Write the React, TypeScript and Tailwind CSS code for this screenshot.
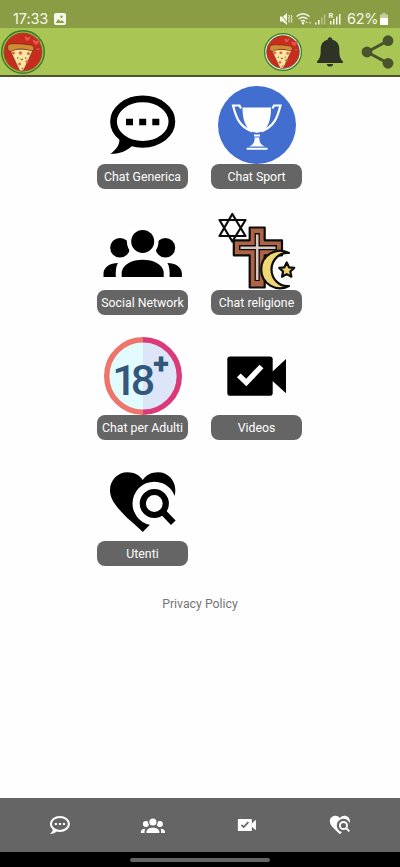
import React from 'react';

type IconProps = { className?: string; gap?: string };

const ChatIcon = ({ className }: IconProps) => (
  <svg viewBox="0 0 78 78" className={className} fill="currentColor">
    <ellipse cx="38.7" cy="35.6" rx="29.2" ry="22.7" fill="none" stroke="currentColor" strokeWidth="6.7" />
    <path d="M15.5 52C16 59 12 63.5 6.5 68C15 68 23 65 28 60L22 54Z" />
    <path d="M22 32.7h7v6.6h-7zM35.2 32.7h7v6.6h-7zM48.3 32.7h7v6.6h-7z" />
  </svg>
);

const PeopleIcon = ({ className, gap = '#fff' }: IconProps) => (
  <svg viewBox="0 0 78 78" className={className} fill="currentColor">
    <circle cx="16" cy="35.8" r="9.8" />
    <circle cx="61.4" cy="35.8" r="9.8" />
    <circle cx="38.7" cy="29.4" r="15.8" fill={gap} />
    <circle cx="38.7" cy="29.4" r="11.5" />
    <path d="M17.7 65V60C19 52 28 47.7 38.7 47.7S58.5 52 59.7 60V65Z" />
    <path d="M-.5 65V61C0 55 6 51 14 51C12 54 11.5 59 11.8 65Z" />
    <path d="M77.9 65V61C77.4 55 71.4 51 63.4 51C65.4 54 65.9 59 65.6 65Z" />
  </svg>
);

const VideoIcon = ({ className, gap = '#fff' }: IconProps) => (
  <svg viewBox="0 0 78 78" className={className} fill="currentColor">
    <rect x="9.3" y="19.4" width="45.4" height="39.3" rx="2.8" />
    <path d="M54 35L68 22V56.3L54 43.5Z" />
    <path d="M20.8 38.4L28.3 45.5L43.5 29.5" fill="none" stroke={gap} strokeWidth="5.4" />
  </svg>
);

const HeartSearchIcon = ({ className, gap = '#fff' }: IconProps) => (
  <svg viewBox="0 0 78 78" className={className} fill="currentColor">
    <path d="M38.7 69C31 61 22 55 14 45C9 39 6 33.5 6 27C6 17 14 9.3 23.5 9.3C30 9.3 35.5 12 38.7 17C42 12 47.5 9.3 54 9.3C63.5 9.3 71.3 17 71.3 27C71.3 30 71 33 69.5 36C64 47 49 58 38.7 69Z" />
    <circle cx="50.3" cy="40.5" r="21.8" fill={gap} />
    <circle cx="50.3" cy="40.5" r="11.5" fill="none" stroke="currentColor" strokeWidth="6.2" />
    <path d="M58.5 48.5L69.3 59.8" stroke="currentColor" strokeWidth="6.4" />
  </svg>
);

const TrophyIcon = ({ className }: IconProps) => (
  <svg viewBox="0 0 78 78" className={className}>
    <circle cx="39" cy="39" r="39" fill="#416ecf" />
    <path d="M24.5 21.5H53C53 34 50 46 38.7 46.7C28 46 24.5 34 24.5 21.5Z" fill="#fff" />
    <path d="M23 22.5L21.5 19.5H15C17.5 29 20 40 34 45.5M54.5 22.5L56 19.5H62.5C60 29 57.5 40 43.5 45.5" fill="none" stroke="#fff" strokeWidth="2.2" />
    <path d="M36 48.5h6v2h-6zM36.7 51.5h4.6C41.3 56 42.5 58.5 47 60.5H31C35.5 58.5 36.7 56 36.7 51.5ZM28.7 61.7H49.5V63.7H28.7Z" fill="#fff" />
  </svg>
);

const ReligionIcon = ({ className }: IconProps) => (
  <svg viewBox="0 0 78 78" className={className} stroke="#0c0c0c" strokeWidth="2.2" strokeLinejoin="round">
    <path d="M14.3 2L1.5 24H27.5ZM14.3 29.5L1.5 8H27.5Z" fill="none" />
    <path d="M31.7 15.5H46.7V28.3H64V43.300H46.700V75.500H31.700V43.300H15.800V28.300H31.700Z" fill="#ae6344" />
    <path d="M39.2 21V69M21 35.700H59" fill="none" strokeWidth="5.2" />
    <path d="M39.2 22.500V68M22.500 35.700H57.500" fill="none" stroke="#d8c8bd" strokeWidth="2.6" />
    <path d="M71 41A18.8 18.8 0 1 0 71 74C62 75 53.5 67.500 53.5 57.500S62 40 71 41Z" fill="#efd874" />
    <path d="M68.7 50.500L71 55.300L76.200 55.900L72.300 59.500L73.400 64.700L68.700 62.100L64 64.700L65.100 59.500L61.200 55.900L66.400 55.300Z" fill="#efd36a" />
  </svg>
);

const AdultIcon = ({ className }: IconProps) => (
  <svg viewBox="0 0 78 78" className={className}>
    <path d="M39 2.7A36.3 36.3 0 0 0 39 75.3" fill="#e1fbfe" stroke="#ed756c" strokeWidth="5.4" />
    <path d="M39 2.7A36.3 36.3 0 0 1 39 75.3" fill="#dce6f8" stroke="#db3a78" strokeWidth="5.4" />
    <text x="8.3 26.7 49.3" y="57.5 57.5 36.5" fill="#31587a" fontFamily="Roboto, sans-serif" fontSize="43" fontWeight="500">
      18<tspan fontSize="29" fontWeight="900">+</tspan>
    </text>
  </svg>
);

const PizzaLogo = ({ className, ring = '#b5b04a' }: { className?: string; ring?: string }) => (
  <svg viewBox="0 0 44 44" className={className}>
    <circle cx="22" cy="22" r="21.3" fill={ring} stroke="#357b2c" strokeWidth="1.4" />
    <circle cx="22" cy="22" r="19" fill="#c92c1d" stroke="#54602a" strokeWidth=".7" />
    <path d="M8.500 19L18 39.500Q20.500 43 23 39.500L32.500 19Z" fill="#fbe5a0" stroke="#6b3518" strokeWidth=".7" />
    <path d="M6.500 17.500C6.500 14.500 8.500 13.700 12 13.700C18 13.700 24 14 29.500 15C33 15.700 33.500 18 32.500 20.500C29 21 28 20 25 19.500C19 18.500 14 19 10 21.500C8 21.500 6.500 20 6.500 17.500Z" fill="#d18b35" stroke="#5c2b16" strokeWidth=".7" />
    <g fill="#e8604a">
      <circle cx="12.500" cy="23" r="1.500" />
      <circle cx="19.500" cy="23" r="1.700" />
      <circle cx="27.500" cy="23.500" r="1.600" />
      <circle cx="26" cy="31.500" r="1.500" />
      <circle cx="18.500" cy="34" r="1.500" />
      <circle cx="21.500" cy="38.500" r="1.100" />
    </g>
    <path d="M16 28h1.300M24 28h1.300M19.500 29q1.200 1.500 2.400 0" fill="none" stroke="#512d20" strokeWidth="1" />
    <g fill="#ef5048" stroke="#7a1a14" strokeWidth=".4">
      <path d="M26.500 11.500C22 9 22.500 5.500 25 6Q26.300 6.300 26.800 7.500Q29.500 4.500 30 7Q30 9.500 26.500 11.500Z" />
      <path d="M35 15.500C30.500 12.500 30.500 9 33 9.300Q34.500 9.500 35 11Q38 8.500 38.500 11Q38.500 13.500 35 15.500Z" />
      <path d="M37 21C34.500 19.500 34.500 17.500 36 17.700L37 18.500Q38.700 17 39 18.500Q39 20 37 21Z" />
    </g>
  </svg>
);

const StatusIcons = () => (
  <svg viewBox="0 0 68 16" className="h-4 w-[68px]" fill="#f5f8e9">
    <path d="M1 5.5h3L8 2v12L4 10.5H1Z" />
    <path d="M1 2.5L10 13.5" stroke="#8a9d45" strokeWidth="1" />
    <path d="M9.500 4l1 1.500-1 1.500 1 1.500-1 1.500 1 1.500M12 4l1 1.500-1 1.500 1 1.500-1 1.500 1 1.500" fill="none" stroke="#f5f8e9" strokeWidth="1" />
    <path d="M17.500 5.500Q24 0 30.500 5.500M19.700 8Q24 4.500 28.300 8M22 10.300Q24 8.700 26 10.300" fill="none" stroke="#f5f8e9" strokeWidth="1.4" />
    <circle cx="24" cy="12.3" r="1.2" />
    <path d="M26 12l1.500-2 1.500 2zM29.500 11h3l-1.500 2z" fill="#c7d29c" />
    <path d="M36 11.500h1.500v2H36zM39 9h1.500v4.500H39z" />
    <path d="M42 6.500h1.500v7H42zM44.800 3.500h1.500v10h-1.500z" fill="#b8c488" />
    <text x="49.500" y="7" fontSize="7.5" fontWeight="700" fontFamily="Roboto, sans-serif">R</text>
    <path d="M51 10h1.500v3.500H51zM54 8h1.500v5.500H54zM57 5.500h1.500v8H57zM60 3h1.500v10.500H60z" />
  </svg>
);

const BellIcon = () => (
  <svg viewBox="0 0 28 30" className="h-[30px] w-7" fill="#2f3326">
    <path d="M14 .3C15.500 .3 16.300 1.300 16.300 2.800C21 4 23.300 7.500 23.300 12C23.300 19 24 21.500 27 24.500V26H1V24.500C4 21.500 4.700 19 4.700 12C4.700 7.500 7 4 11.700 2.800C11.700 1.300 12.500 .3 14 .3Z" />
    <path d="M10.800 27H17.200C17 28.700 15.700 29.600 14 29.600S11 28.700 10.800 27Z" />
  </svg>
);

const ShareIcon = () => (
  <svg viewBox="0 0 34 36" className="h-9 w-[34px]" fill="#49542e">
    <path d="M27 6.700L6 18L27 29.300" fill="none" stroke="#49542e" strokeWidth="3" />
    <circle cx="27" cy="6.7" r="5.4" />
    <circle cx="6" cy="18" r="5.4" />
    <circle cx="27" cy="29.3" r="5.4" />
  </svg>
);

const tiles = [
  { label: 'Chat Generica', Icon: ChatIcon },
  { label: 'Chat Sport', Icon: TrophyIcon },
  { label: 'Social Network', Icon: PeopleIcon },
  { label: 'Chat religione', Icon: ReligionIcon },
  { label: 'Chat per Adulti', Icon: AdultIcon },
  { label: 'Videos', Icon: VideoIcon },
  { label: 'Utenti', Icon: HeartSearchIcon },
];

const tabs = [ChatIcon, PeopleIcon, VideoIcon, HeartSearchIcon];

const App = () => {
  return (
    <div className="flex h-[867px] w-[400px] flex-col overflow-hidden bg-[#fefefe] font-['Roboto',sans-serif]">
      {/* Status bar */}
      <div className="flex h-7 shrink-0 items-end bg-[#8a9d45] pl-[13px] pr-3 font-['Inter',sans-serif] text-[14.5px] leading-4 text-[#f5f8e9]">
        <span className="mb-px w-[36px] whitespace-nowrap tracking-[-0.1px]">17:33</span>
        <svg viewBox="0 0 12 12" className="mb-[3px] ml-[5px] h-3 w-3">
          <rect width="12" height="12" rx="2" fill="#f5f8e9" />
          <path d="M1.500 10L4.500 6L6.500 8.500L8 7L10.500 10Z" fill="#8a9d45" />
          <circle cx="7.5" cy="3.8" r="1.2" fill="#8a9d45" />
        </svg>
        <div className="ml-auto flex items-end">
          <div className="mb-px"><StatusIcons /></div>
          <span className="mb-px w-[32px] whitespace-nowrap tracking-[-0.3px]">62%</span>
          <svg viewBox="0 0 8 12" className="mb-[3px] ml-[1px] h-3 w-2">
            <path d="M2.500 0h3v1.500H8V12H0V1.500h2.500z" fill="#c5cfa2" />
            <path d="M0 5h8v5.500Q8 12 6.500 12h-5Q0 12 0 10.500Z" fill="#fff" />
          </svg>
        </div>
      </div>

      {/* Header */}
      <header className="flex h-[49px] shrink-0 items-center border-b-2 border-[#4c5233] bg-[#a9c553] pl-px pr-[5px]">
        <PizzaLogo className="h-11 w-11" />
        <PizzaLogo className="ml-auto h-[38px] w-[38px]" ring="#e4e8d6" />
        <div className="ml-[14px]"><BellIcon /></div>
        <div className="ml-[17px]"><ShareIcon /></div>
      </header>

      {/* Categories */}
      <main className="flex flex-1 flex-col items-center pt-[9px]">
        <div className="mr-px grid grid-cols-[91px_91px] gap-x-[23px] gap-y-[22.6px]">
          {tiles.map(({ label, Icon }) => (
            <div key={label} className="flex h-[103px] flex-col items-center">
              <Icon className="h-[78px] w-[78px] shrink-0 overflow-visible text-black" />
              <div className="flex h-[25px] w-full items-center justify-center whitespace-nowrap rounded-[8px] bg-[#656565] pt-[2px] text-[12.3px] text-white">
                {label}
              </div>
            </div>
          ))}
        </div>
        <a className="mt-[29px] text-[12.3px] leading-[18px] text-[#757575]">Privacy Policy</a>
      </main>

      {/* Bottom tabs */}
      <nav className="flex h-[54px] shrink-0 items-center bg-[#656565] px-[13px]">
        {tabs.map((Icon, i) => (
          <div key={i} className="flex flex-1 justify-center">
            <Icon className="h-6 w-6 overflow-visible text-white" gap="#656565" />
          </div>
        ))}
      </nav>
      <div className="flex h-[15px] shrink-0 justify-center bg-black pt-[6px]">
        <div className="h-1 w-[140px] rounded-full bg-[#656565]" />
      </div>
    </div>
  );
};

export default App;
